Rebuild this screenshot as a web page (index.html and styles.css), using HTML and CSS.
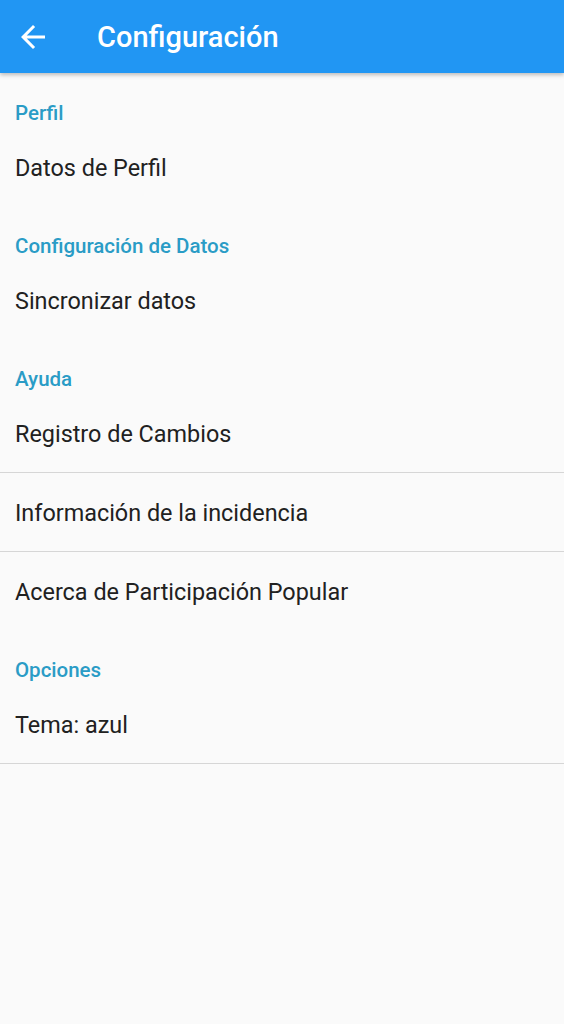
FILE: index.html
```html
<!DOCTYPE html>
<html lang="es">
<head>
<meta charset="utf-8">
<title>Configuración</title>
<link rel="stylesheet" href="styles.css">
</head>
<body>
<header class="appbar">
  <svg class="back" viewBox="0 0 24 24" width="36" height="36"><path fill="#fff" d="M20 11H7.83l5.59-5.59L12 4l-8 8 8 8 1.41-1.41L7.83 13H20v-2z"/></svg>
  <h1 class="title">Configuración</h1>
</header>
<main class="prefs">
  <div class="cat">Perfil</div>
  <div class="item">Datos de Perfil</div>
  <div class="cat">Configuración de Datos</div>
  <div class="item">Sincronizar datos</div>
  <div class="cat">Ayuda</div>
  <div class="item divided">Registro de Cambios</div>
  <div class="item divided">Información de la incidencia</div>
  <div class="item">Acerca de Participación Popular</div>
  <div class="cat">Opciones</div>
  <div class="item divided">Tema: azul</div>
</main>
</body>
</html>
```
FILE: styles.css
```css
html, body {
  margin: 0;
  padding: 0;
  background: #fafafa;
  font-family: Roboto, "Noto Sans", sans-serif;
}
.appbar {
  height: 73px;
  background: #2196f3;
  display: flex;
  align-items: center;
  box-shadow: 0 2px 4px rgba(0,0,0,0.25);
  position: relative;
  z-index: 1;
}
.back {
  margin-left: 15px;
  flex: none;
}
.title {
  margin: 0 0 0 46px;
  color: #fff;
  font-size: 29px;
  font-weight: 500;
}
.prefs {
  display: flex;
  flex-direction: column;
}
.cat {
  height: 55px;
  box-sizing: border-box;
  padding: 27px 15px 0;
  font-size: 20.5px;
  font-weight: 500;
  color: #2a9cc6;
  line-height: 26px;
}
.item {
  height: 78px;
  display: flex;
  align-items: center;
  padding: 2px 15px 0;
  font-size: 23.4px;
  color: #212121;
  box-sizing: border-box;
}
.item.divided {
  border-bottom: 1px solid #d6d6d6;
  height: 79px;
}
```
